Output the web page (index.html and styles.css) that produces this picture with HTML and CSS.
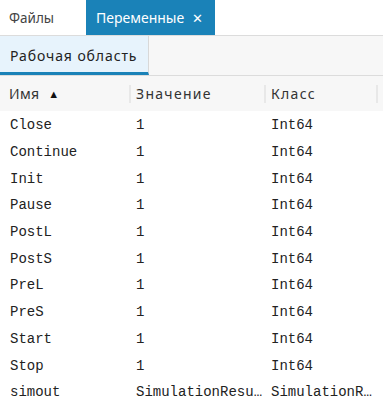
FILE: index.html
```html
<!DOCTYPE html>
<html lang="ru">
<head>
  <meta charset="UTF-8">
  <title>Переменные</title>
  <link rel="stylesheet" href="styles.css">
</head>
<body>
  <div class="tabs">
    <div class="tab">Файлы</div>
    <div class="tab active">Переменные <span class="close">&#x2715;</span></div>
  </div>

  <div class="subtabs">
    <div class="subtab">Рабочая область</div>
  </div>

  <div class="grid">
    <div class="head">
      <div class="hcell name">Имя <span class="sort">&#9650;</span></div>
      <div class="hcell value">Значение</div>
      <div class="hcell cls">Класс</div>
      <div class="hcell rest"></div>
    </div>
    <div class="body" id="rows"></div>
  </div>

  <script>
    const vars = [
      ['Close', '1', 'Int64'],
      ['Continue', '1', 'Int64'],
      ['Init', '1', 'Int64'],
      ['Pause', '1', 'Int64'],
      ['PostL', '1', 'Int64'],
      ['PostS', '1', 'Int64'],
      ['PreL', '1', 'Int64'],
      ['PreS', '1', 'Int64'],
      ['Start', '1', 'Int64'],
      ['Stop', '1', 'Int64'],
      ['simout', 'SimulationResult', 'SimulationResult']
    ];

    const rowsEl = document.getElementById('rows');
    vars.forEach(v => {
      const row = document.createElement('div');
      row.className = 'row';
      row.innerHTML = `<div class="cell name">${v[0]}</div><div class="cell value">${v[1]}</div><div class="cell cls">${v[2]}</div>`;
      rowsEl.appendChild(row);
    });
  </script>
</body>
</html>
```

FILE: styles.css
```css
body {
  margin: 0;
  font-family: "Noto Sans", "Open Sans", sans-serif;
  color: #333333;
  background: #ffffff;
  width: 383px;
  height: 404px;
  overflow: hidden;
}
.tabs {
  display: flex;
  height: 35px;
  border-bottom: 1px solid #dcdcdc;
  background: #ffffff;
}
.tab {
  display: flex;
  align-items: center;
  padding: 0 0 0 9px;
  width: 77px;
  font-size: 13.5px;
  color: #444444;
}
.tab.active {
  width: auto;
  padding: 0 12px 0 10px;
  background: #1a82b8;
  color: #ffffff;
  font-size: 14px;
}
.close {
  margin-left: 8px;
  font-size: 13px;
}
.subtabs {
  display: flex;
  height: 39px;
  background: #f7f7f7;
  border-bottom: 1px solid #dcdcdc;
}
.subtab {
  display: flex;
  align-items: center;
  box-sizing: border-box;
  width: 149px;
  padding: 3px 0 0 10px;
  background: #e7f3fc;
  border-right: 1px solid #d8d8d8;
  border-bottom: 3px solid #1a82b8;
  font-size: 14px;
  letter-spacing: 0.9px;
  color: #222222;
}
.head {
  display: grid;
  grid-template-columns: 129px 135px 112px 1fr;
  height: 35px;
  background: #f7f7f7;
  font-size: 14px;
}
.hcell {
  display: flex;
  align-items: center;
  padding-left: 7px;
  letter-spacing: 1.3px;
  position: relative;
}
.hcell::before {
  content: "";
  position: absolute;
  left: 0;
  top: 9px;
  bottom: 8px;
  border-left: 2px solid #e8e8e8;
}
.hcell.name {
  padding-left: 9px;
  letter-spacing: 0.3px;
}
.hcell.name::before {
  display: none;
}
.sort {
  font-size: 11px;
  margin-left: 9px;
  color: #111111;
}
.row {
  display: grid;
  grid-template-columns: 130px 135px 112px;
  height: 26.7px;
  align-items: center;
  font-family: "Liberation Mono", monospace;
  font-size: 14px;
  color: #222222;
}
.cell {
  white-space: nowrap;
  overflow: hidden;
  text-overflow: ellipsis;
  padding-left: 6px;
}
.cell.name {
  padding-left: 10px;
}
.body {
  padding-top: 1px;
}
```
